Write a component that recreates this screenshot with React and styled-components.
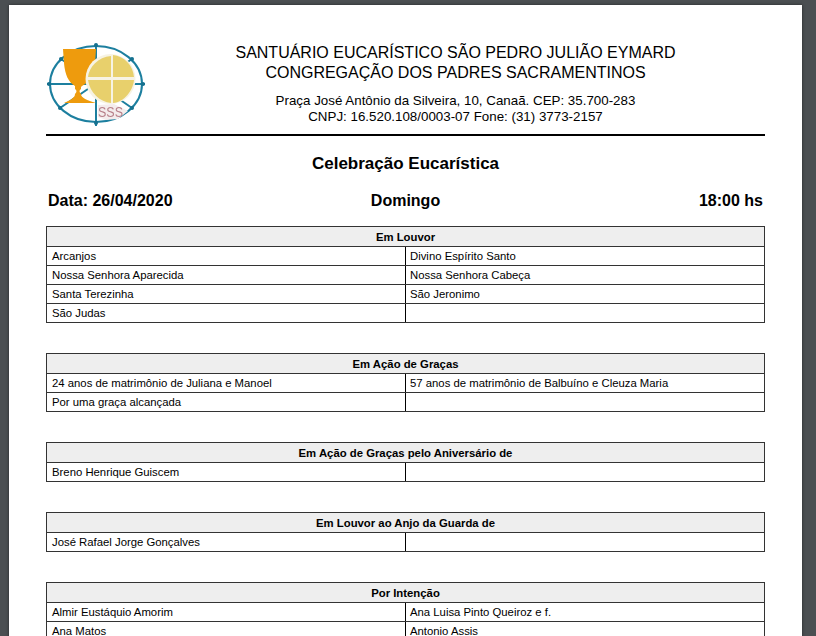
import React from 'react';
import styled, { createGlobalStyle } from 'styled-components';

const GlobalStyle = createGlobalStyle`
  html, body {
    margin: 0;
    height: 100%;
    overflow: hidden;
    background: #4b4f52;
  }
`;

const Viewer = styled.div`
  height: 636px;
  overflow: hidden;
  padding: 5px 14px 0 9px;
  box-sizing: border-box;
`;

const Page = styled.div`
  background: #fff;
  height: 700px;
  padding: 0 37px;
  box-shadow: 0 0 3px rgba(0, 0, 0, 0.5);
  font-family: 'Liberation Sans', Arial, sans-serif;
  color: #000;
`;

const Letterhead = styled.header`
  display: flex;
  height: 131px;
  box-sizing: border-box;
  border-bottom: 2px solid #000;
  padding-top: 37px;
`;

const LogoBox = styled.div`
  width: 100px;
  flex: none;
  line-height: 0;
`;

const HeadText = styled.div`
  flex: 1;
  text-align: center;
  padding-top: 1px;
`;

const HeadTitle = styled.div`
  font-size: 16px;
  line-height: 20px;
`;

const HeadAddress = styled.div`
  font-size: 13.35px;
  line-height: 16px;
  margin-top: ${({ $first }) => ($first ? '10px' : '0')};
`;

const DocTitle = styled.h1`
  margin: 18px 0 0;
  font-size: 17px;
  line-height: 20px;
  font-weight: bold;
  text-align: center;
`;

const DateRow = styled.div`
  display: grid;
  grid-template-columns: 1fr auto 1fr;
  margin: 17px 2px 0;
  font-size: 16px;
  line-height: 20px;
  font-weight: bold;

  span:last-child {
    text-align: right;
  }
`;

const Tables = styled.div`
  display: flex;
  flex-direction: column;
  gap: 30px;
  margin-top: 15px;
`;

const Table = styled.section`
  border: 1px solid #333;
  border-bottom-width: 0;
  font-size: 11.33px;
`;

const TableHead = styled.div`
  background: #eee;
  height: 19px;
  box-sizing: border-box;
  padding-top: 1px;
  line-height: 19px;
  text-align: center;
  font-weight: bold;
  box-shadow: 0 1px 0 #333;
  margin-bottom: 1px;
`;

const Row = styled.div`
  display: grid;
  grid-template-columns: 358px 1fr;
  height: 18px;
  line-height: 18px;
  border-bottom: 1px solid #333;
`;

const Cell = styled.div`
  padding-left: 5px;
  & + & {
    border-left: 1px solid #000;
    padding-left: 4px;
  }
`;

function Logo() {
  return (
    <svg width="100" height="86" viewBox="46 42 100 86">
      <defs>
        <filter id="soft">
          <feGaussianBlur stdDeviation="0.45" />
        </filter>
      </defs>
      <g filter="url(#soft)">
        <g fill="none" stroke="#1d7f9f" strokeWidth="2">
          <ellipse cx="96" cy="84" rx="46" ry="38" />
          <path d="M96 44v82M47 84h98M61 59l71 49M60 108l72-49" />
        </g>
        <g fill="#136f8e">
          <circle cx="96" cy="45" r="2" />
          <circle cx="96" cy="123" r="2" />
          <circle cx="49" cy="84" r="2" />
          <circle cx="143" cy="84" r="2" />
          <circle cx="61" cy="59" r="2" />
          <circle cx="132" cy="59" r="2" />
          <circle cx="60" cy="108" r="2" />
          <circle cx="132" cy="108" r="2" />
        </g>
        <path
          fill="#ee9b08"
          d="M63 49h33l-1 14c-1 11-5 19-13 23l-1 1v2c-2 1-2 3 0 5 0 4 6 6 15 9H64c6-3 11-5 11-9 2-2 2-4 0-5v-3c-7-4-10-12-11-23z"
        />
        <circle cx="110.500" cy="79" r="25" fill="#f7f3e4" />
        <g fill="#e8d06c">
          <path d="M111 56v21H88c1-10 10-20 23-21z" />
          <path d="M113 55c11 1 20 10 21 22h-21z" />
          <path d="M88 80h23v23c-11-1-21-10-23-23z" />
          <path d="M113 80h21c-1 11-10 22-21 23z" />
        </g>
        <path fill="#f4ecec" d="M98 105l16-1 14 7-10 8-12 1-8-3z" />
        <text
          x="98"
          y="117"
          fontSize="14"
          textLength="25"
          lengthAdjust="spacingAndGlyphs"
          fill="#b8808a"
          fontFamily="Liberation Sans, sans-serif"
        >
          SSS
        </text>
      </g>
    </svg>
  );
}

const tables = [
  {
    title: 'Em Louvor',
    rows: [
      ['Arcanjos', 'Divino Espírito Santo'],
      ['Nossa Senhora Aparecida', 'Nossa Senhora Cabeça'],
      ['Santa Terezinha', 'São Jeronimo'],
      ['São Judas', ''],
    ],
  },
  {
    title: 'Em Ação de Graças',
    rows: [
      ['24 anos de matrimônio de Juliana e Manoel', '57 anos de matrimônio de Balbuíno e Cleuza Maria'],
      ['Por uma graça alcançada', ''],
    ],
  },
  { title: 'Em Ação de Graças pelo Aniversário de', rows: [['Breno Henrique Guiscem', '']] },
  { title: 'Em Louvor ao Anjo da Guarda de', rows: [['José Rafael Jorge Gonçalves', '']] },
  {
    title: 'Por Intenção',
    rows: [
      ['Almir Eustáquio Amorim', 'Ana Luisa Pinto Queiroz e f.'],
      ['Ana Matos', 'Antonio Assis'],
    ],
  },
];

export default function App() {
  return (
    <Viewer>
      <GlobalStyle />
      <Page>
        <Letterhead>
          <LogoBox>
            <Logo />
          </LogoBox>
          <HeadText>
            <HeadTitle>SANTUÁRIO EUCARÍSTICO SÃO PEDRO JULIÃO EYMARD</HeadTitle>
            <HeadTitle>CONGREGAÇÃO DOS PADRES SACRAMENTINOS</HeadTitle>
            <HeadAddress $first>Praça José Antônio da Silveira, 10, Canaã. CEP: 35.700-283</HeadAddress>
            <HeadAddress>CNPJ: 16.520.108/0003-07 Fone: (31) 3773-2157</HeadAddress>
          </HeadText>
        </Letterhead>
        <DocTitle>Celebração Eucarística</DocTitle>
        <DateRow>
          <span>Data: 26/04/2020</span>
          <span>Domingo</span>
          <span>18:00 hs</span>
        </DateRow>
        <Tables>
          {tables.map(t => (
            <Table key={t.title}>
              <TableHead>{t.title}</TableHead>
              {t.rows.map(r => (
                <Row key={r[0]}>
                  <Cell>{r[0]}</Cell>
                  <Cell>{r[1]}</Cell>
                </Row>
              ))}
            </Table>
          ))}
        </Tables>
      </Page>
    </Viewer>
  );
}
